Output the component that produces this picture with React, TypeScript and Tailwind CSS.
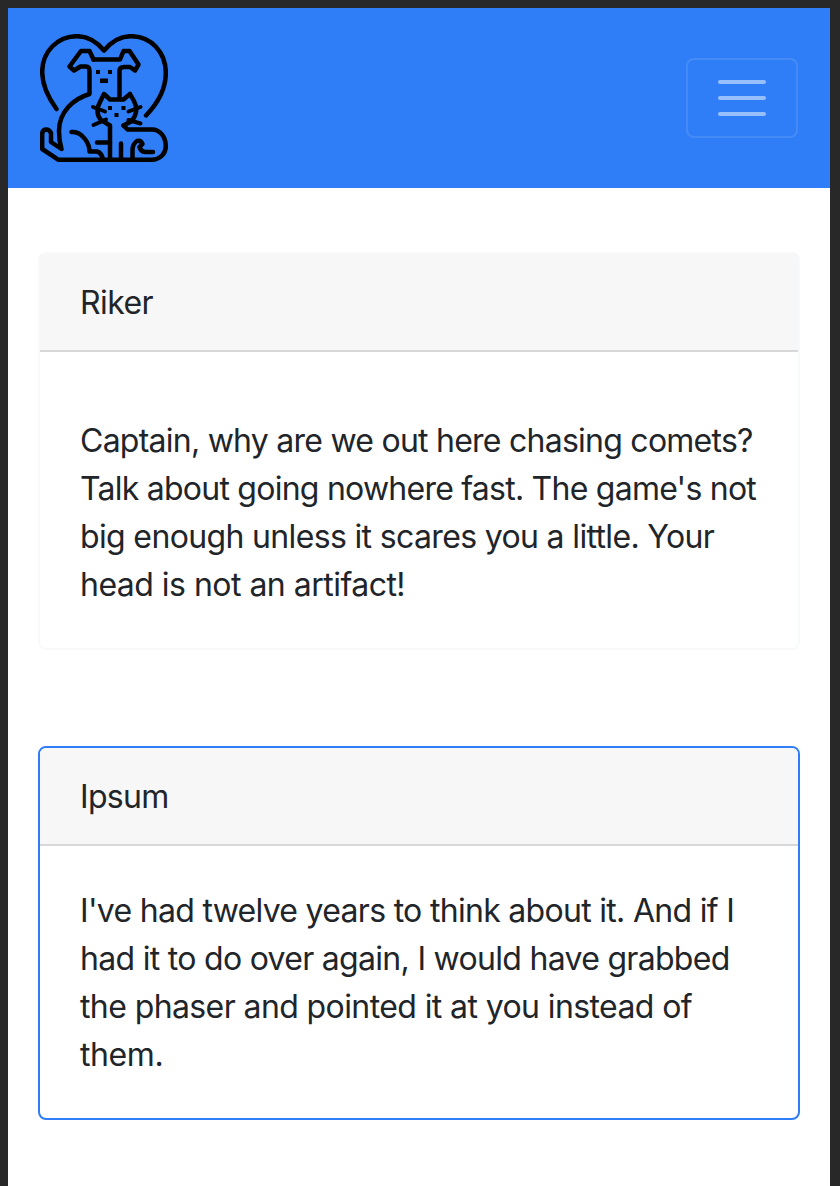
function PetsLogo() {
  return (
    <svg viewBox="0 0 128 128" className="h-32 w-32" fill="none" stroke="#000" strokeWidth="4.5" strokeLinecap="round" strokeLinejoin="round" aria-label="Pets">
      <path d="M16.5 75C7 62 2.2 50 2.2 38C2.2 17 18 2.2 37 2.2C49 2.2 57 8 64 16.5C71 8 79 2.2 91 2.2C111 2.2 125.800 18 125.800 39C125.800 55 118 69 106 81.5" />
      <path d="M53.5 25.5H80L83.5 17H89.5L98.5 30.5L95 36.5L90 33H84Q79.5 33 79.5 37V64" />
      <path d="M53.5 25.5L49.5 17H41L29.5 32.5L34 36.5L40.5 32.5H46Q49.5 32.5 49.5 37V60C33 65 19 78 19 97Q19 107 21.5 115L11 108V99Q9.5 95.5 6 95.5Q2.200 96 2.200 100V115L18.500 125.800H112C121 125 125.800 119 125.800 112C125.800 103 120 95.500 112 95.500H87.500L83.500 91.500" />
      <path d="M70 126V91.500L61 86Q57.500 82 57.500 77Q57.500 72 60 68L64 60L70 65.500H83.500L90 60L94 67Q97 73 96 78Q95 84 91 87.500L83.500 91.500" />
      <path strokeWidth="4" d="M53 73L65 77.500M53.500 91L66 85.500M100.500 73L88.500 77.500M100.500 89.500L88.500 86" />
      <path d="M31.500 98Q39 97 45 105Q49.500 111 49.500 117.500H57Q62 119 63 126M57 108.500H70M81 109.500V126" />
      <path d="M92.500 126V116Q92.500 110 97 107Q101 106 102.500 110L99.500 113Q101 118 106 118H113" />
      <g fill="#000" stroke="none">
        <path d="M56 36h4v4h-4zM68 36h4v4h-4zM60 44.500h8v4.500h-8zM68 72h4v4h-4zM81.500 72h4v4h-4zM74.500 79h4v4h-4z" />
      </g>
    </svg>
  );
}

export default function App() {
  return (
    <div className="h-[1186px] w-[840px] overflow-hidden bg-[#282828] pt-2 pr-[10px] pl-2 font-['Inter',sans-serif] text-[32px] leading-[48px] text-[#212529]">
      <div className="h-full bg-white">
        <header className="flex h-[180px] items-center justify-between bg-[#2f7ef7] px-8">
          <PetsLogo />
          <button aria-label="Toggle navigation" className="flex h-20 w-28 flex-col items-center justify-center gap-3 rounded-lg border-2 border-white/10">
            <span className="h-1 w-12 rounded-full bg-white/50" />
            <span className="h-1 w-12 rounded-full bg-white/50" />
            <span className="h-1 w-12 rounded-full bg-white/50" />
          </button>
        </header>
        <main className="flex flex-col gap-24 px-[30px] pt-16">
          <section className="h-[398px] rounded-lg border-2 border-[#f8f9fa]">
            <h2 className="h-[98px] border-b-2 border-[#d8d8d8] bg-[#f7f7f7] px-10 pt-[25px] tracking-[-0.6px]">Riker</h2>
            <p className="px-10 pt-[65px] whitespace-nowrap">
              <span className="block tracking-[-0.75px]">Captain, why are we out here chasing comets?</span>
              <span className="block tracking-[-0.76px]">Talk about going nowhere fast. The game's not</span>
              <span className="block tracking-[-0.65px]">big enough unless it scares you a little. Your</span>
              <span className="block tracking-[-0.52px]">head is not an artifact!</span>
            </p>
          </section>
          <section className="h-[374px] rounded-lg border-2 border-[#2f7ef7]">
            <h2 className="h-[98px] rounded-t-md border-b-2 border-[#d8d8d8] bg-[#f7f7f7] px-10 pt-[25px] tracking-[-0.7px]">Ipsum</h2>
            <p className="px-10 pt-[41px] whitespace-nowrap">
              <span className="block tracking-[-0.7px]">I've had twelve years to think about it. And if I</span>
              <span className="block tracking-[-0.7px]">had it to do over again, I would have grabbed</span>
              <span className="block tracking-[-0.6px]">the phaser and pointed it at you instead of</span>
              <span className="block tracking-[-0.4px]">them.</span>
            </p>
          </section>
        </main>
      </div>
    </div>
  );
}
